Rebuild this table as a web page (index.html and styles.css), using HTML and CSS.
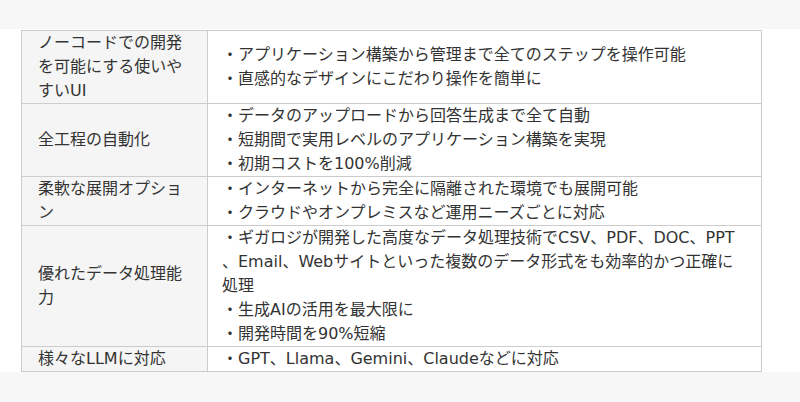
FILE: index.html
```html
<!DOCTYPE html>
<html lang="ja">
<head>
<meta charset="utf-8">
<link rel="stylesheet" href="styles.css">
</head>
<body>
<div class="band"></div>
<main class="content">
  <table class="spec">
    <tr>
      <th>ノーコードでの開発を可能にする使いやすいUI</th>
      <td>
        <div>・アプリケーション構築から管理まで全てのステップを操作可能</div>
        <div>・直感的なデザインにこだわり操作を簡単に</div>
      </td>
    </tr>
    <tr>
      <th>全工程の自動化</th>
      <td>
        <div>・データのアップロードから回答生成まで全て自動</div>
        <div>・短期間で実用レベルのアプリケーション構築を実現</div>
        <div>・初期コストを100%削減</div>
      </td>
    </tr>
    <tr>
      <th>柔軟な展開オプション</th>
      <td>
        <div>・インターネットから完全に隔離された環境でも展開可能</div>
        <div>・クラウドやオンプレミスなど運用ニーズごとに対応</div>
      </td>
    </tr>
    <tr>
      <th>優れたデータ処理能力</th>
      <td>
        <div>・ギガロジが開発した高度なデータ処理技術でCSV、PDF、DOC、PPT<br>、Email、Webサイトといった複数のデータ形式をも効率的かつ正確に<br>処理</div>
        <div>・生成AIの活用を最大限に</div>
        <div>・開発時間を90%短縮</div>
      </td>
    </tr>
    <tr>
      <th>様々なLLMに対応</th>
      <td>
        <div>・GPT、Llama、Gemini、Claudeなどに対応</div>
      </td>
    </tr>
  </table>
</main>
<div class="band band-bottom"></div>
</body>
</html>
```

FILE: styles.css
```css
html, body {
  margin: 0;
  padding: 0;
  background: #ffffff;
}
body {
  width: 800px;
  height: 402px;
  overflow: hidden;
  font-family: "DejaVu Sans", "Noto Sans CJK JP", sans-serif;
  font-size: 16px;
  line-height: 24px;
  color: #333333;
}
.band {
  height: 29px;
  background: #f7f7f7;
}
.band-bottom {
  height: 30px;
}
.content {
  padding: 1px 0 0 21px;
}
.spec {
  border-collapse: separate;
  border-spacing: 0;
  table-layout: fixed;
  width: 741px;
  border-left: 1px solid #cccccc;
  border-top: 1px solid #cccccc;
}
.spec th,
.spec td {
  border-right: 1px solid #cccccc;
  border-bottom: 1px solid #cccccc;
  vertical-align: middle;
  text-align: left;
  font-weight: normal;
  padding: 0;
}
.spec th {
  width: 153px;
  padding: 0 16px;
  background: #f5f5f5;
}
.spec td {
  padding: 0 14px;
  white-space: nowrap;
}
```
